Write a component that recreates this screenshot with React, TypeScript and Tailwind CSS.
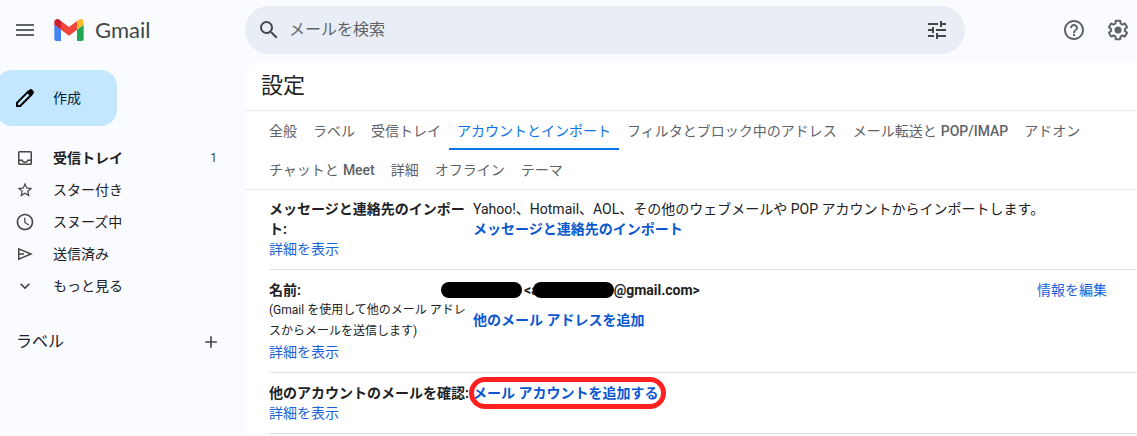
import React from "react";
import {
  MdAccessTime,
  MdAdd,
  MdExpandMore,
  MdHelpOutline,
  MdMenu,
  MdSearch,
  MdStarBorder,
  MdTune,
} from "react-icons/md";

interface NavItem {
  label: string;
  icon: React.ReactNode;
  count?: number;
  active?: boolean;
}

interface Tab {
  label: string;
  latin?: string;
  active?: boolean;
}

const InboxIcon: React.FC = () => (
  <svg viewBox="0 0 20 20" className="w-5 h-5" fill="none" stroke="currentColor" strokeWidth="1.5">
    <rect x="3.75" y="3.75" width="12.5" height="12.5" rx="0.75" />
    <path d="M4 12.25h3.2c.5 1.4 1.5 2 2.8 2s2.3-.6 2.8-2H16" />
  </svg>
);

const SendIcon: React.FC = () => (
  <svg viewBox="0 0 20 20" className="w-5 h-5" fill="none" stroke="currentColor" strokeWidth="1.5">
    <path d="M3.75 4.9v10.2L16 10 3.75 4.9z" />
    <path d="M4 10h5" />
  </svg>
);

const PencilIcon: React.FC = () => (
  <svg viewBox="0 0 18 18" className="w-[18px] h-[18px]">
    <path
      d="M1 17v-3.2L12.2 2.6l3.2 3.2L4.2 17H1z"
      fill="none"
      stroke="currentColor"
      strokeWidth="2"
    />
    <path
      d="M10.6 3.4l2.7-2.7c.9-.9 2-.9 2.8-.1l1.3 1.3c.8.8.8 2-.1 2.8l-2.7 2.7-4-4z"
      fill="currentColor"
    />
  </svg>
);

const GearIcon: React.FC = () => (
  <svg viewBox="0 0 24 24" className="w-6 h-6" fill="currentColor">
    <path d="M13.85 22.25h-3.7c-.74 0-1.36-.54-1.45-1.27l-.27-1.89c-.27-.14-.53-.29-.79-.46l-1.8.72c-.7.26-1.47-.03-1.81-.65L2.2 15.53c-.35-.66-.2-1.44.36-1.88l1.53-1.19c-.01-.15-.02-.3-.02-.46 0-.15.01-.31.02-.46l-1.52-1.19c-.59-.45-.74-1.26-.37-1.88l1.85-3.19c.34-.62 1.11-.9 1.79-.63l1.81.73c.26-.17.52-.32.78-.46l.27-1.91c.09-.7.71-1.25 1.44-1.25h3.7c.74 0 1.36.54 1.45 1.27l.27 1.89c.27.14.53.29.79.46l1.8-.72c.71-.26 1.48.03 1.82.65l1.84 3.18c.36.66.2 1.44-.36 1.88l-1.52 1.19c.01.15.02.3.02.46s-.01.31-.02.46l1.52 1.19c.56.45.72 1.23.37 1.86l-1.86 3.22c-.34.62-1.11.9-1.8.63l-1.8-.72c-.26.17-.52.32-.78.46l-.27 1.91c-.1.68-.72 1.22-1.46 1.22zm-3.23-2h2.76l.37-2.55.53-.22c.44-.18.88-.44 1.34-.78l.45-.34 2.38.96 1.38-2.4-2.03-1.58.07-.56c.03-.26.06-.51.06-.78s-.03-.53-.06-.78l-.07-.56 2.03-1.58-1.39-2.4-2.39.96-.45-.35c-.42-.32-.87-.58-1.33-.77l-.52-.22-.37-2.55h-2.76l-.37 2.55-.53.21c-.44.19-.88.44-1.34.79l-.45.33-2.38-.95-1.39 2.39 2.03 1.58-.07.56a7 7 0 0 0-.06.79c0 .26.02.53.06.78l.07.56-2.03 1.58 1.38 2.4 2.39-.96.45.35c.43.33.86.58 1.33.77l.53.22.38 2.55z" />
    <circle cx="12" cy="12" r="3.5" />
  </svg>
);

const GmailLogo: React.FC = () => (
  <svg viewBox="52 42 88 66" className="w-[30px] h-[22px]">
    <path fill="#4285f4" d="M58 108h14V74L52 59v43c0 3.32 2.69 6 6 6" />
    <path fill="#22a855" d="M120 108h14c3.32 0 6-2.69 6-6V59l-20 15" />
    <path fill="#fbbc2c" d="M120 48v26l20-15v-8c0-7.42-8.47-11.65-14.4-7.2" />
    <path fill="#f2453a" d="M72 74V48l24 18 24-18v26L96 92" />
    <path fill="#c9202d" d="M52 51v8l20 15V48l-5.6-4.2c-5.94-4.45-14.4-.22-14.4 7.2" />
  </svg>
);

const navItems: NavItem[] = [
  { label: "受信トレイ", icon: <InboxIcon />, count: 1, active: true },
  { label: "スター付き", icon: <MdStarBorder size={18} /> },
  { label: "スヌーズ中", icon: <MdAccessTime size={20} /> },
  { label: "送信済み", icon: <SendIcon /> },
  { label: "もっと見る", icon: <MdExpandMore size={20} /> },
];

const tabs: Tab[] = [
  { label: "全般" },
  { label: "ラベル" },
  { label: "受信トレイ" },
  { label: "アカウントとインポート", active: true },
  { label: "フィルタとブロック中のアドレス" },
  { label: "メール転送と", latin: "POP/IMAP" },
  { label: "アドオン" },
  { label: "チャットと", latin: "Meet" },
  { label: "詳細" },
  { label: "オフライン" },
  { label: "テーマ" },
];

const Header: React.FC = () => (
  <header className="flex items-center h-[62px] pb-0.5 text-[#444746]">
    <div className="flex items-center w-[245px] shrink-0 pl-[13px]">
      <button aria-label="メインメニュー" className="text-[#5f6368]">
        <MdMenu size={24} />
      </button>
      <a href="#inbox" className="flex items-center gap-[11px] ml-[17px]">
        <GmailLogo />
        <span className="font-['Lato'] text-[22px] leading-7">Gmail</span>
      </a>
    </div>
    <form className="flex items-center flex-1 max-w-[720px] h-12 rounded-full bg-[#e9eef6] pl-3 pr-4">
      <button type="button" aria-label="検索">
        <MdSearch size={24} />
      </button>
      <input
        type="text"
        aria-label="メールを検索"
        placeholder="メールを検索"
        className="flex-1 min-w-0 ml-2 text-base bg-transparent outline-none placeholder:text-[#5f6368]"
      />
      <button type="button" aria-label="検索オプション">
        <MdTune size={24} />
      </button>
    </form>
    <div className="flex items-center gap-5 ml-auto pl-4 pr-[7px] text-[#5f6368]">
      <button aria-label="サポート">
        <MdHelpOutline size={24} />
      </button>
      <button aria-label="設定">
        <GearIcon />
      </button>
    </div>
  </header>
);

const Sidebar: React.FC = () => (
  <aside className="w-[245px] shrink-0 pt-2 text-sm">
    <button className="flex items-center gap-[19px] w-[121px] h-14 -ml-1 pl-5 rounded-2xl bg-[#c2e7ff] text-black">
      <PencilIcon />
      <span className="text-[#001d35]">作成</span>
    </button>
    <nav className="mt-4">
      {navItems.map((item) => (
        <a
          key={item.label}
          href="#"
          className={`flex items-center h-8 pl-[15px] pr-7 text-[#202124] ${
            item.active ? "font-bold" : ""
          }`}
        >
          <span className="flex items-center justify-center w-5 mr-[18px] text-[#444746]">
            {item.icon}
          </span>
          {item.label}
          {item.count && (
            <span className="ml-auto text-xs font-normal text-[#444746]">{item.count}</span>
          )}
        </a>
      ))}
    </nav>
    <div className="flex items-center justify-between mt-7 h-6 pl-4 pr-6 text-[#202124]">
      <h2 className="text-base">ラベル</h2>
      <button aria-label="新しいラベルを作成" className="text-[#444746]">
        <MdAdd size={20} />
      </button>
    </div>
  </aside>
);

const DetailLink: React.FC = () => (
  <a href="#" className="block text-[#1a62d6]">
    詳細を表示
  </a>
);

// Black bar that hides a private value
const Redacted: React.FC = () => (
  <span className="relative w-[81px] h-4 shrink-0 rounded-full bg-black"></span>
);

const App: React.FC = () => {
  return (
    <div
      lang="ja"
      className="min-h-screen bg-[#f9fbff] font-['Roboto','Noto_Sans_CJK_JP',sans-serif] overflow-hidden"
    >
      <Header />
      <div className="flex">
        <Sidebar />

        <main className="flex-1 min-w-0 bg-white rounded-tl-2xl text-sm leading-5 text-[#202124]">
          <h1 className="flex items-center h-[49px] pl-4 border-b border-[#e6e8ea] text-[22px]">
            設定
          </h1>

          {/* Tabs */}
          <div className="flex flex-wrap pl-4 border-b border-[#e6e8ea]">
            {tabs.map((tab) => (
              <a
                key={tab.label}
                href="#"
                className={`flex items-center gap-1 h-[39px] px-2 ${
                  tab.active
                    ? "text-[#0b73e8] border-b-2 border-[#0b73e8] pt-0.5"
                    : "text-[#5f6368]"
                }`}
              >
                {tab.label}
                {tab.latin && <span className="font-medium">{tab.latin}</span>}
              </a>
            ))}
          </div>

          {/* Settings */}
          <div className="pl-6">
            <section className="flex pt-[9px] pb-[10px] border-b border-[#dfe1e3]">
              <div className="w-[204px] shrink-0">
                <h3 className="font-bold">メッセージと連絡先のインポート:</h3>
                <DetailLink />
              </div>
              <div>
                <p>
                  Yahoo!、Hotmail、AOL、その他のウェブメールや POP アカウントからインポートします。
                </p>
                <a href="#" className="font-bold text-[#0b57d0]">
                  メッセージと連絡先のインポート
                </a>
              </div>
            </section>

            <section className="flex py-[10px] border-b border-[#dfe1e3]">
              <div className="w-[204px] shrink-0">
                <h3 className="font-bold">名前:</h3>
                <p className="text-xs leading-[21px]">
                  (Gmail を使用して他のメール アドレスからメールを送信します)
                </p>
                <DetailLink />
              </div>
              <div>
                <div className="flex items-center h-5 -ml-8 font-bold">
                  <Redacted />
                  <span className="ml-0.5 -mr-1.5">&lt;a</span>
                  <Redacted />
                  <span>@gmail.com&gt;</span>
                </div>
                <a href="#" className="block mt-[10px] font-bold text-[#0b57d0]">
                  他のメール アドレスを追加
                </a>
              </div>
              <a href="#" className="ml-auto mr-[30px] text-[#1a62d6]">
                情報を編集
              </a>
            </section>

            <section className="flex py-[10px] border-b border-[#dfe1e3]">
              <div className="w-[204px] shrink-0">
                <h3 className="font-bold">他のアカウントのメールを確認:</h3>
                <DetailLink />
              </div>
              <div>
                <a href="#" className="relative block font-bold text-[#0b57d0]">
                  メール アカウントを追加する
                  <span className="absolute -left-1 -right-2 -inset-y-1.5 border-[5px] border-[#ff2020] rounded-2xl"></span>
                </a>
              </div>
            </section>
          </div>
        </main>
      </div>
    </div>
  );
};

export default App;
